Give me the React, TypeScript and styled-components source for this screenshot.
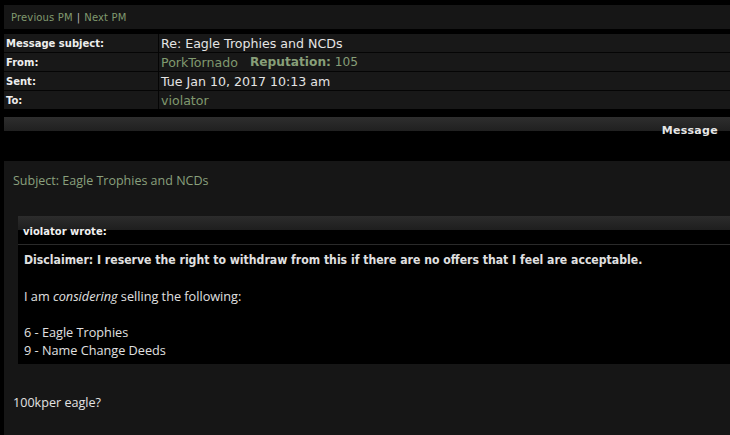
import React from "react";
import styled, { createGlobalStyle } from "styled-components";

const GlobalStyle = createGlobalStyle`
  html, body { margin: 0; padding: 0; background: #000; }
  body { overflow: hidden; }
`;

const Page = styled.div`
  padding: 5px 0 0 4px;
  width: 726px;
  height: 430px;
  display: flex;
  flex-direction: column;
  font-family: "DejaVu Sans", Verdana, sans-serif;
`;

const NavBar = styled.div`
  height: 24px;
  background: #161616;
  display: flex;
  align-items: center;
  padding-left: 7px;
  font-size: 10px;
  letter-spacing: 0.15px;
  color: #7f9870;
  gap: 4px;
`;

const NavLink = styled.span`
  color: #80996f;
`;

const Sep = styled.span`
  color: #bbb;
`;

const InfoTable = styled.div`
  margin-top: 5px;
  display: grid;
  grid-template-columns: 154px 1fr;
  column-gap: 1px;
  row-gap: 1px;
  background: #050505;
`;

const Label = styled.div`
  height: 18px;
  background: #181818;
  display: flex;
  align-items: center;
  padding-left: 2px;
  font-size: 10px;
  font-weight: bold;
  color: #eee;
`;

const Value = styled.div<{ $green?: boolean }>`
  height: 18px;
  background: #181818;
  display: flex;
  align-items: center;
  padding-left: 2px;
  font-size: 12.6px;
  color: ${(p) => (p.$green ? "#80996f" : "#e4e4e4")};
  gap: 12px;
`;

const Rep = styled.span`
  color: #879f78;
  font-size: 12.2px;
  b { font-weight: bold; }
`;

const MessageHead = styled.div`
  margin-top: 6px;
  height: 20px;
  background: linear-gradient(#2e2e2e, #202020) no-repeat;
  background-size: 100% 14px;
  display: flex;
  justify-content: flex-end;
  align-items: flex-end;
  padding-right: 12px;
  font-size: 11px;
  font-weight: bold;
  color: #e6e6e6;
  line-height: 12px;
  letter-spacing: 0.3px;
  transform: translateY(2px);
`;

const Post = styled.div`
  margin-top: 26px;
  flex: 1;
  background: #161616;
  padding: 11px 0 0 9px;
  font-family: "Open Sans", "Noto Sans", sans-serif;
`;

const Subject = styled.div`
  font-size: 12.5px;
  color: #8aa07d;
  line-height: 18px;
`;

const Quote = styled.div`
  margin: 26px 0 0 5px;
  background: #000;
`;

const QuoteHead = styled.div`
  background: linear-gradient(#2c2c2c, #1e1e1e) no-repeat;
  background-size: 100% 14px;
  border-bottom: 1px solid #2a2a2a;
  display: flex;
  align-items: flex-end;
  padding: 0 0 7px 5px;
  box-sizing: border-box;
  height: 29px;
  font-family: "DejaVu Sans", Verdana, sans-serif;
  font-size: 10px;
  font-weight: bold;
  color: #f0f0f0;
`;

const QuoteBody = styled.div`
  padding: 6px 6px 5px 6px;
  font-size: 12.7px;
  line-height: 18px;
  color: #e0e0e0;
`;

const Strong = styled.div`
  font-family: "DejaVu Sans Condensed", "DejaVu Sans", sans-serif;
  font-weight: bold;
  font-size: 12.15px;
`;

const Line = styled.div`
  min-height: 18px;
`;

const Reply = styled.div`
  margin-top: 30px;
  font-size: 12.6px;
  color: #e2e2e2;
`;

export default function App() {
  return (
    <>
      <GlobalStyle />
      <Page>
        <NavBar>
          <NavLink>Previous PM</NavLink>
          <Sep>|</Sep>
          <NavLink>Next PM</NavLink>
        </NavBar>
        <InfoTable>
          <Label>Message subject:</Label>
          <Value>Re: Eagle Trophies and NCDs</Value>
          <Label>From:</Label>
          <Value $green>
            PorkTornado
            <Rep>
              <b>Reputation:</b> 105
            </Rep>
          </Value>
          <Label>Sent:</Label>
          <Value>Tue Jan 10, 2017 10:13 am</Value>
          <Label>To:</Label>
          <Value $green>violator</Value>
        </InfoTable>
        <MessageHead>Message</MessageHead>
        <Post>
          <Subject>Subject: Eagle Trophies and NCDs</Subject>
          <Quote>
            <QuoteHead>violator wrote:</QuoteHead>
            <QuoteBody>
              <Strong>Disclaimer: I reserve the right to withdraw from this if there are no offers that I feel are acceptable.</Strong>
              <Line />
              <Line>
                I am <i>considering</i> selling the following:
              </Line>
              <Line />
              <Line>6 - Eagle Trophies</Line>
              <Line>9 - Name Change Deeds</Line>
            </QuoteBody>
          </Quote>
          <Reply>100kper eagle?</Reply>
        </Post>
      </Page>
    </>
  );
}
